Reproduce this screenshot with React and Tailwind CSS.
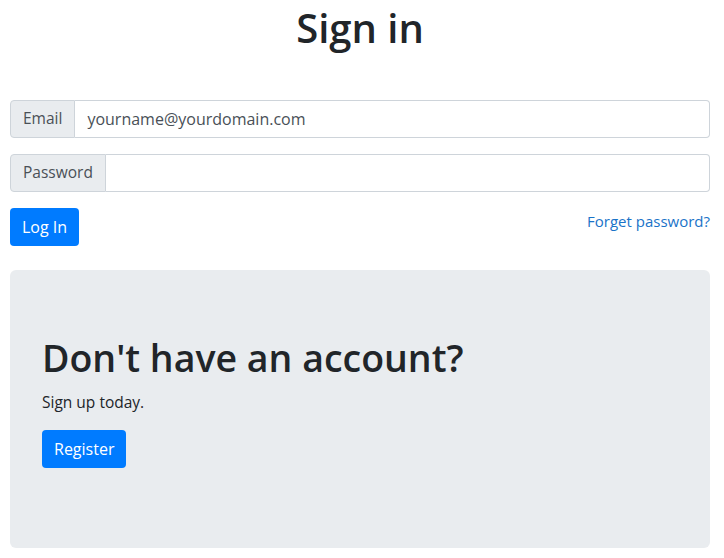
import React from 'react';

const font = { fontFamily: '"Open Sans", "Noto Sans", sans-serif' };

function InputGroup({ label, type, placeholder }) {
  return (
    <div className="flex h-[38px] mb-4">
      <span className="flex items-center px-3 bg-[#e9ecef] text-[#495057] text-[15.5px] border border-[#ced4da] rounded-l">
        {label}
      </span>
      <input
        type={type}
        placeholder={placeholder}
        className="flex-1 min-w-0 px-3 text-base text-[#495057] placeholder:text-[#495057] border border-l-0 border-[#ced4da] rounded-r outline-none"
      />
    </div>
  );
}

export default function App() {
  return (
    <div className="pl-[10px] pr-[14px] text-[#212529]" style={font}>
      <h1 className="text-[40px] leading-[1.2] font-semibold text-center pt-1 mb-12">Sign in</h1>

      <form onSubmit={(e) => e.preventDefault()}>
        <InputGroup label="Email" type="email" placeholder="yourname@yourdomain.com" />
        <InputGroup label="Password" type="password" placeholder="" />
        <div className="flex justify-between items-start">
          <button className="h-[38px] px-3 bg-[#007bff] text-white text-base rounded">Log In</button>
          <a href="#" className="text-[#1a73c8] text-[15px] mt-[2px]">Forget password?</a>
        </div>
      </form>

      <div className="mt-6 bg-[#e9ecef] rounded-md px-8 py-16">
        <h2 className="text-[37.5px] leading-[48px] font-semibold mb-2">Don't have an account?</h2>
        <p className="text-[15.5px] leading-6 mb-4">Sign up today.</p>
        <p className="mb-4">
          <button className="h-[38px] px-3 bg-[#007bff] text-white text-base rounded">Register</button>
        </p>
      </div>
    </div>
  );
}
